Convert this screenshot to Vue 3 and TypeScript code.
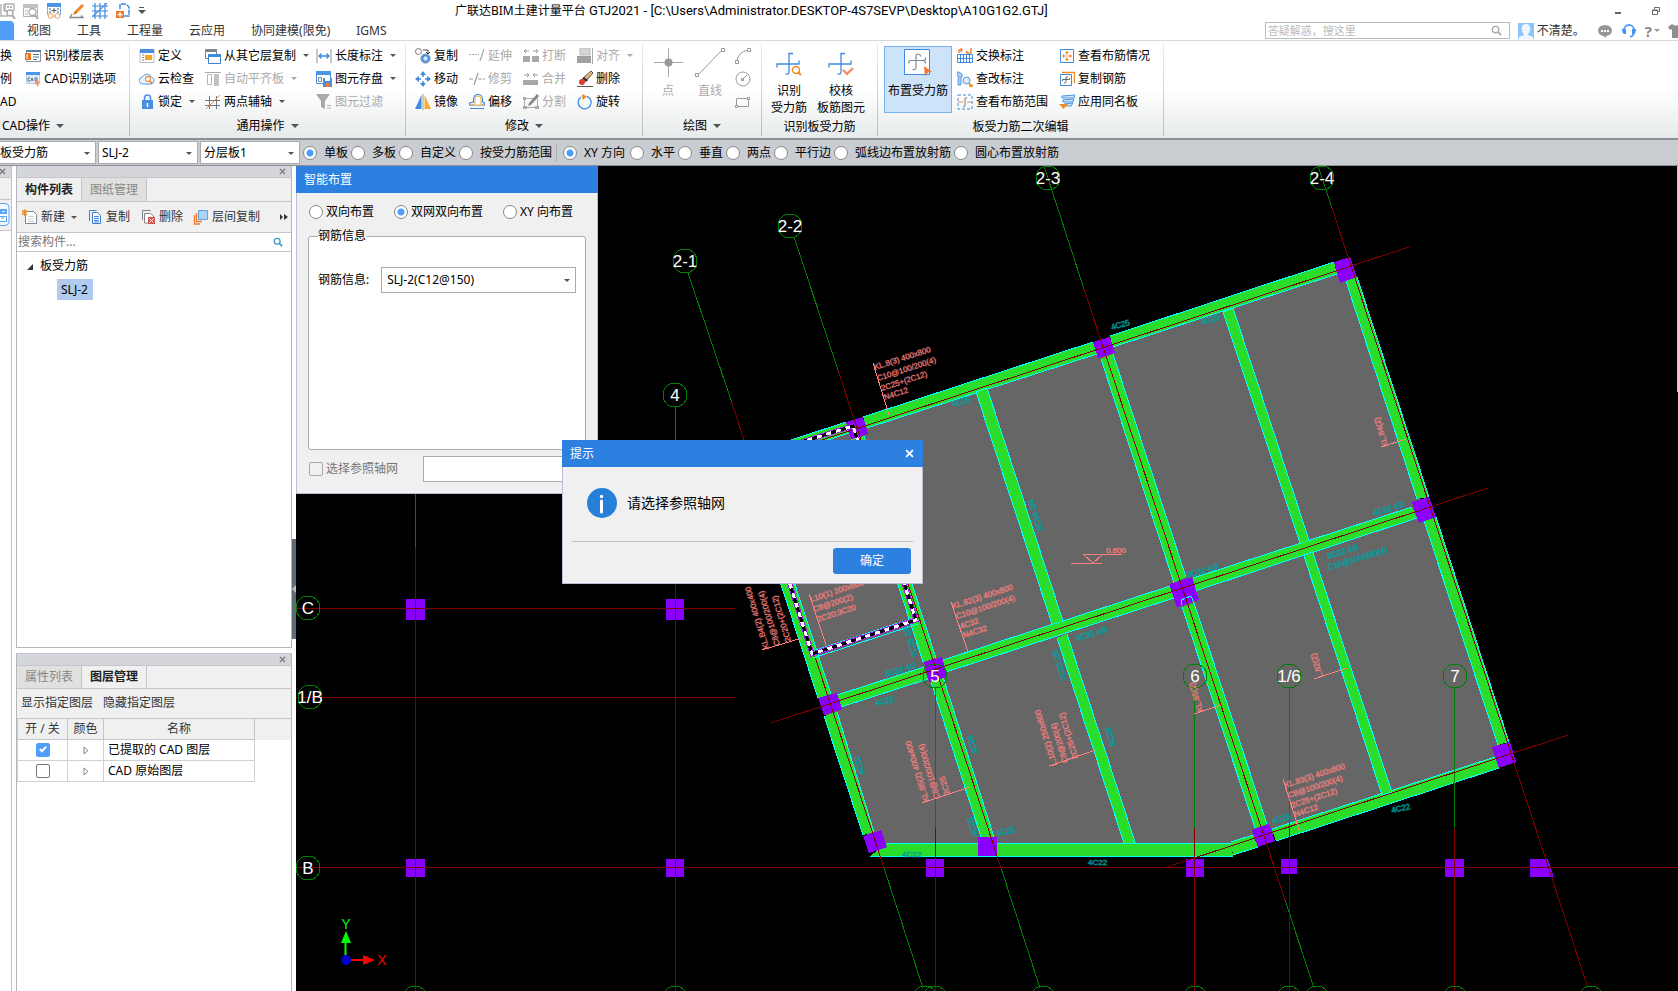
<script setup lang="ts">
import { ref } from 'vue'

interface Tool {
  icon: string
  text: string
  caret?: boolean
  off?: boolean
}
interface Note {
  x: number
  y: number
  r: number
  t: string
}
type Line = [number, number, number, number]

const quick = ['q-find', 'q-search', 'q-view', 'q-brush', 'q-grid', 'q-add']
const tabs = ['视图', '工具', '工程量', '云应用', '协同建模(限免)', 'IGMS']

const cadTools: Tool[] = [
  { icon: 'floor', text: '识别楼层表' },
  { icon: 'cad', text: 'CAD识别选项' },
]
const commonTools: Tool[] = [
  { icon: 'define', text: '定义' },
  { icon: 'cloud', text: '云检查' },
  { icon: 'lock', text: '锁定', caret: true },
  { icon: 'layers', text: '从其它层复制', caret: true },
  { icon: 'align-slab', text: '自动平齐板', caret: true, off: true },
  { icon: 'axis', text: '两点辅轴', caret: true },
  { icon: 'length', text: '长度标注', caret: true },
  { icon: 'save', text: '图元存盘', caret: true },
  { icon: 'filter', text: '图元过滤', off: true },
]
const editTools: Tool[] = [
  { icon: 'copy', text: '复制' },
  { icon: 'move', text: '移动' },
  { icon: 'mirror', text: '镜像' },
  { icon: 'extend', text: '延伸', off: true },
  { icon: 'trim', text: '修剪', off: true },
  { icon: 'offset', text: '偏移' },
  { icon: 'break', text: '打断', off: true },
  { icon: 'merge', text: '合并', off: true },
  { icon: 'split', text: '分割', off: true },
  { icon: 'align', text: '对齐', caret: true, off: true },
  { icon: 'erase', text: '删除' },
  { icon: 'rotate', text: '旋转' },
]
const rebarTools: Tool[] = [
  { icon: 'swap', text: '交换标注' },
  { icon: 'modify', text: '查改标注' },
  { icon: 'range', text: '查看布筋范围' },
  { icon: 'status', text: '查看布筋情况' },
  { icon: 'copybar', text: '复制钢筋' },
  { icon: 'apply', text: '应用同名板' },
]

const area = ref('单板')
const areas = ['单板', '多板', '自定义', '按受力筋范围']
const direction = ref('XY 方向')
const directions = ['XY 方向', '水平', '垂直', '两点', '平行边', '弧线边布置放射筋', '圆心布置放射筋']
const layout = ref('双网双向布置')
const layouts = ['双向布置', '双网双向布置', 'XY 向布置']
const layers = ref([
  { name: '已提取的 CAD 图层', on: true },
  { name: 'CAD 原始图层', on: false },
])

/* Beams: edge A start/end, edge B start/end */
const beams: number[][] = [
  [863, 417, 1093, 342, 867, 428, 1097, 354],
  [1110, 336, 1334, 262, 1113, 347, 1337, 274],
  [742, 456, 846, 422, 745, 467, 849, 433],
  [1357, 277, 1429, 497, 1346, 281, 1417, 499],
  [1436, 517, 1509, 742, 1424, 521, 1498, 745],
  [837, 695, 924, 667, 841, 707, 928, 679],
  [943, 660, 1170, 586, 946, 672, 1174, 598],
  [1193, 578, 1412, 507, 1195, 591, 1417, 518],
  [1272, 829, 1495, 757, 1276, 841, 1499, 768],
  [1231, 842, 1253, 835, 1233, 855, 1258, 847],
  [770, 551, 818, 698, 784, 551, 831, 694],
  [824, 716, 863, 835, 837, 712, 874, 832],
  [851, 439, 923, 662, 864, 436, 936, 658],
  [931, 682, 981, 837, 943, 677, 994, 837],
  [976, 392, 1052, 624, 987, 388, 1063, 621],
  [1057, 638, 1125, 846, 1067, 634, 1136, 845],
  [1101, 359, 1174, 583, 1113, 354, 1186, 577],
  [1182, 607, 1255, 828, 1194, 603, 1267, 824],
  [1223, 312, 1300, 543, 1233, 308, 1309, 540],
  [1304, 556, 1382, 795, 1313, 553, 1392, 792],
  [887, 843, 1231, 843, 870, 856, 1233, 856],
]
const columns = [
  '846,422 863,417 868,434 851,439',
  '1093,342 1110,337 1115,353 1098,358',
  '1334,262 1350,257 1357,277 1340,283',
  '1412,502 1429,497 1436,517 1419,523',
  '1492,747 1510,742 1516,762 1499,768',
  '1169,584 1192,577 1199,600 1177,607',
  '924,662 942,657 947,677 929,682',
  '818,698 837,693 842,709 824,715',
  '863,836 881,830 887,847 869,853',
  '978,837 997,837 997,856 978,856',
  '1252,830 1269,824 1275,841 1258,847',
  '406,599 425,599 425,620 406,620',
  '666,599 684,599 684,620 666,620',
  '406,859 425,859 425,877 406,877',
  '666,859 684,859 684,877 666,877',
  '926,859 944,859 944,877 926,877',
  '1186,859 1204,859 1204,877 1186,877',
  '1281,859 1297,859 1297,874 1281,874',
  '1445,859 1464,859 1464,877 1445,877',
  '1530,859 1548,859 1554,877 1530,877',
]
const redAxes: Line[] = [
  [296, 608.5, 735, 608.5],
  [296, 697.5, 735, 697.5],
  [296, 867.5, 1678, 867.5],
  [415.5, 547, 415.5, 991],
  [675.5, 547, 675.5, 991],
  [935.5, 828, 935.5, 991],
  [1194.5, 828, 1194.5, 991],
  [1289.5, 828, 1289.5, 991],
  [1454.5, 828, 1454.5, 991],
  [740, 467, 1409, 247],
  [771, 723, 1488, 488],
  [1167, 867, 1568, 735],
  [732, 403, 884, 868],
  [838, 370, 1001, 868],
  [1084, 289, 1285, 900],
  [1332, 208, 1588, 988],
]
const greenAxes: Line[] = [
  [415.5, 494, 415.5, 547],
  [675.5, 407, 675.5, 547],
  [935.5, 688, 935.5, 828],
  [1194.5, 688, 1194.5, 828],
  [1289.5, 688, 1289.5, 828],
  [1454.5, 688, 1454.5, 828],
  [688, 273, 732, 403],
  [794, 237, 838, 370],
  [1044, 166, 1084, 289],
  [1318, 166, 1332, 208],
  [884, 868, 923, 988],
  [1001, 868, 1040, 988],
  [1285, 900, 1314, 988],
]
const bubbles = [
  { x: 685, y: 261, t: '2-1' },
  { x: 790, y: 226, t: '2-2' },
  { x: 1048, y: 178, t: '2-3' },
  { x: 1322, y: 178, t: '2-4' },
  { x: 675, y: 395, t: '4' },
  { x: 308, y: 608, t: 'C' },
  { x: 310, y: 697, t: '1/B' },
  { x: 308, y: 868, t: 'B' },
  { x: 935, y: 676, t: '5' },
  { x: 1195, y: 676, t: '6' },
  { x: 1289, y: 676, t: '1/6' },
  { x: 1455, y: 676, t: '7' },
]
const footBubbles = [415, 675, 925, 935, 1043, 1195, 1289, 1317, 1455, 1591]

const marks: Note[] = [
  { x: 875, y: 370, r: -18, t: 'KL.8(3) 400x800' },
  { x: 878, y: 381, r: -18, t: 'C10@100/200(4)' },
  { x: 882, y: 391, r: -18, t: '2C25+(2C12)' },
  { x: 885, y: 400, r: -18, t: 'N4C12' },
  { x: 953, y: 609, r: -18, t: 'KL.82(3) 400x800' },
  { x: 957, y: 619, r: -18, t: 'C10@100/200(4)' },
  { x: 961, y: 629, r: -18, t: '4C32' },
  { x: 964, y: 638, r: -18, t: 'N4C32' },
  { x: 811, y: 602, r: -18, t: 'L10(1) 200x600' },
  { x: 814, y: 612, r: -18, t: 'C8@200(2)' },
  { x: 818, y: 622, r: -18, t: '2C20;3C20' },
  { x: 1285, y: 788, r: -18, t: 'KL.83(3) 400x800' },
  { x: 1289, y: 798, r: -18, t: 'C8@100/200(4)' },
  { x: 1292, y: 808, r: -18, t: '2C25+(2C12)' },
  { x: 1295, y: 817, r: -18, t: 'N4C12' },
  { x: 769, y: 648, r: -107, t: 'KL.B4(2) 400x400' },
  { x: 780, y: 645, r: -107, t: 'C8@100/200(4)' },
  { x: 791, y: 641, r: -107, t: '2C20+(2C12)' },
  { x: 929, y: 801, r: -107, t: 'KL.85(2) 400x400' },
  { x: 940, y: 798, r: -107, t: 'C8@100/200(4)' },
  { x: 950, y: 794, r: -107, t: '2C25' },
  { x: 1057, y: 765, r: -107, t: 'L.10(2) 250x600' },
  { x: 1068, y: 762, r: -107, t: 'C8@200(4)' },
  { x: 1078, y: 758, r: -107, t: '2C25+(2C12)' },
  { x: 1323, y: 677, r: -107, t: 'L.82(2)' },
  { x: 1203, y: 711, r: -107, t: 'KL.85(2)' },
  { x: 1388, y: 446, r: -107, t: 'KL.84(2)' },
  { x: 1106, y: 553, r: 0, t: '0.600' },
]
const leaders: Line[] = [
  [873, 363, 889, 415],
  [951, 602, 968, 652],
  [809, 594, 826, 645],
  [1283, 779, 1300, 833],
  [762, 650, 802, 638],
  [922, 803, 970, 787],
  [1049, 766, 1096, 750],
  [1314, 679, 1347, 668],
  [1194, 714, 1221, 705],
  [1381, 447, 1406, 439],
]
const bars: Note[] = [
  { x: 1112, y: 330, r: -16, t: '4C25' },
  { x: 953, y: 407, r: -16, t: '4C25' },
  { x: 1202, y: 325, r: -16, t: '4C25' },
  { x: 1328, y: 559, r: -17, t: '9C32 4/5' },
  { x: 1329, y: 570, r: -17, t: 'C10@100/200(4)' },
  { x: 1188, y: 578, r: -17, t: '8C32 4/4' },
  { x: 1273, y: 824, r: -16, t: '4C25' },
  { x: 1392, y: 813, r: -12, t: '4C22' },
  { x: 1374, y: 516, r: -17, t: '4C32 4/2' },
  { x: 1077, y: 641, r: -17, t: '9C32 4/5' },
  { x: 886, y: 677, r: -17, t: '5C32 4/2' },
  { x: 876, y: 706, r: -14, t: '4C22' },
  { x: 902, y: 857, r: 0, t: '4C22' },
  { x: 1088, y: 865, r: 0, t: '4C22' },
  { x: 997, y: 836, r: -12, t: '4C25' },
  { x: 865, y: 774, r: -107, t: '4C22' },
  { x: 978, y: 753, r: -107, t: '4C25' },
  { x: 1116, y: 745, r: -107, t: '8C28' },
  { x: 978, y: 835, r: -107, t: '4C25' },
  { x: 1067, y: 680, r: -107, t: '7C25 2/5' },
  { x: 918, y: 656, r: -107, t: '7C25 2/5' },
  { x: 1043, y: 530, r: -107, t: '8C34 2/4' },
]
</script>

<template>
  <div class="app">
    <svg class="sprite" aria-hidden="true">
      <symbol id="q-find" viewBox="0 0 16 16"><path d="M1 1v12h7M4 1v7M14 8V1H5v7h4" fill="none" stroke="#b0b0b0" stroke-width="1.4"/><path d="M7 3h2v2H7zM10 3h2v2h-2z" fill="#b0b0b0"/><circle cx="10" cy="10" r="3" fill="#fff" stroke="#a8a8a8" stroke-width="1.4"/><path d="M12 12l3 4" stroke="#a8a8a8" stroke-width="2"/></symbol>
      <symbol id="q-search" viewBox="0 0 16 16"><path d="M.5 1.5h14v12H.5z" fill="#fff" stroke="#b0b0b0"/><path d="M0 1h15v4H0z" fill="#c0c0c0"/><path d="M2 8h3M2 11h3" stroke="#b0b0b0"/><circle cx="9.500" cy="9" r="3.500" fill="#fff" stroke="#a8a8a8" stroke-width="1.3"/><path d="M12 12l3 4" stroke="#a8a8a8" stroke-width="2"/></symbol>
      <symbol id="q-view" viewBox="0 0 16 16"><path d="M1.500 1v11M14.500 1v11M1 11.500h3M12 11.500h3" stroke="#7db2ea"/><path d="M1 0h14v4H1z" fill="#4a97e8"/><path d="M8 5v5M5.500 7.500h5M3 6h2M11 6h2M3 9h2M11 9h2" stroke="#4a5a6a"/><circle cx="4.500" cy="13" r="2.400" fill="#fff" stroke="#ee9a62"/><circle cx="11.500" cy="13" r="2.400" fill="#fff" stroke="#ee9a62"/><path d="M7 13h2" stroke="#ee9a62"/></symbol>
      <symbol id="q-brush" viewBox="0 0 16 16"><path d="M14 2L6 10" stroke="#f08a24" stroke-width="3"/><path d="M6 8l2 2-4 2z" fill="#e06a10"/><path d="M3 11l-2 3.500h13l-2-2" fill="none" stroke="#7d8890" stroke-width="1.300"/></symbol>
      <symbol id="q-grid" viewBox="0 0 16 16"><path d="M3 0v16M8 0v16M13 0v16M0 3h16M0 8h16M0 13h16M15 0L0 14" stroke="#3e8ae0" stroke-width="1.200"/></symbol>
      <symbol id="q-add" viewBox="0 0 16 16"><path d="M5 6V1h6l3 3v9H9" fill="none" stroke="#3e8ae0" stroke-width="1.500" stroke-dasharray="5 1"/><path d="M1 8h8v7H1z" fill="#ec7424"/><path d="M5 9v5M2.500 11.500h5" stroke="#fff" stroke-width="1.300"/></symbol>
      <symbol id="floor" viewBox="0 0 16 16"><path d="M1.500 2.500h14v11h-14z" fill="#fff" stroke="#8a949c"/><path d="M1 2h15v2H1z" fill="#5b7f9f"/><path d="M0 5h6v7H0z" fill="#ec7424"/><path d="M2 6v5" stroke="#fff"/><path d="M8 6.500h6M8 9h6M8 11.500h4" stroke="#56718c"/></symbol>
      <symbol id="cad" viewBox="0 0 16 16"><path d="M1.500 2.500h13v10h-13z" fill="#dcebfb" stroke="#b6d0ea"/><path d="M1 1h14v3H1z" fill="#4a97e8"/><path d="M5 7H3v3h2M6 10l1-3 1 3M10 7v3h2V7z" fill="none" stroke="#5b7288"/><path d="M11 8l4 4-2 .500 1 2.500-1.500.500-1-2.500-1.500 1z" fill="#f08a64"/></symbol>
      <symbol id="define" viewBox="0 0 16 16"><path d="M1 1.500h14v13H1z" fill="#fff" stroke="#b9bec4"/><path d="M1 1h14v4H1z" fill="#4a8ee0"/><path d="M6 7h7v5H6z" fill="#f5a51e"/><path d="M3 7h2M3 9.500h2M3 12h2" stroke="#888"/></symbol>
      <symbol id="cloud" viewBox="0 0 16 16"><path d="M4 13h8a3.500 3.500 0 0 0 .5-6.800A5 5 0 0 0 3.500 6 3.500 3.500 0 0 0 4 13z" fill="#eef6ff" stroke="#5a9ee8"/><circle cx="9" cy="8" r="2.500" fill="#fff" stroke="#ee9a50" stroke-width="1.300"/><path d="M11 10l2 3" stroke="#ee7a30" stroke-width="1.500"/></symbol>
      <symbol id="lock" viewBox="0 0 16 16"><path d="M5.500 7V4a2.800 2.800 0 0 1 6 0v3" fill="none" stroke="#4a8ee0" stroke-width="1.600"/><path d="M3 6h11v9H3z" fill="#4a8ee0"/><path d="M8.500 9v4" stroke="#fff" stroke-width="1.500"/></symbol>
      <symbol id="layers" viewBox="0 0 16 16"><path d="M.500 1.500h11v9H.500z" fill="#fff" stroke="#7c868e"/><path d="M0 1h12v3H0z" fill="#7c868e"/><path d="M3.500 6.500h12v9h-12z" fill="#fff" stroke="#3e7ed0"/><path d="M3 6h13v3H3z" fill="#3e8ae0"/></symbol>
      <symbol id="align-slab" viewBox="0 0 16 16"><path d="M0 1.500h16" stroke="#aaa"/><path d="M2.500 3.500h4v10h-4z" fill="#fff" stroke="#b8b8b8"/><path d="M9 3h5v12H9z" fill="#c2c2c2"/></symbol>
      <symbol id="axis" viewBox="0 0 16 16"><path d="M4.500 2v13M11.500 2v13M0 6.500h15M0 11.500h15" stroke="#6e7880"/><path d="M1 15L15 1" stroke="#f08a4a"/></symbol>
      <symbol id="length" viewBox="0 0 16 16"><path d="M1 1v14M15 1v14" stroke="#8a949c"/><path d="M3 8h10M5.500 5.500L3 8l2.500 2.500M10.500 5.500L13 8l-2.500 2.500" fill="none" stroke="#3e8ae0" stroke-width="1.300"/></symbol>
      <symbol id="save" viewBox="0 0 16 16"><path d="M.500 1.500h14v11H.500z" fill="#fff" stroke="#4a8ee0"/><path d="M0 0h15v4H0z" fill="#4a97e8"/><path d="M2.500 6.500h3v4h-3z" fill="none" stroke="#7b8b99"/><path d="M7 7h9v9H7z" fill="#4a8ee0"/><path d="M9 7h5v3H9z" fill="#fff"/><path d="M10 12h4v4h-4z" fill="#f07c28"/></symbol>
      <symbol id="filter" viewBox="0 0 16 16"><path d="M0 0h14L9 7v8l-4-2V7z" fill="#a9a9a9"/><path d="M11 11.500h4M11 14h4" stroke="#b0b0b0"/></symbol>
      <symbol id="copy" viewBox="0 0 16 16"><circle cx="3.500" cy="3.500" r="3" fill="#fff" stroke="#777"/><path d="M8 2h5v3M11 4l2 2 2-2" fill="none" stroke="#444"/><circle cx="10.500" cy="10.500" r="4.500" fill="#fff" stroke="#4a6a9a"/><circle cx="10.500" cy="10.500" r="3" fill="#cfe6fa" stroke="#3e8ae0" stroke-width="1.500"/></symbol>
      <symbol id="move" viewBox="0 0 16 16"><path d="M8 0l3 4H5zM8 16l3-4H5zM0 8l4-3v6zM16 8l-4-3v6z" fill="#3e8ae0"/><path d="M8 3v3M8 10v3M3 8h3M10 8h3" stroke="#3e8ae0" stroke-width="1.500"/></symbol>
      <symbol id="mirror" viewBox="0 0 16 16"><path d="M6.500 1v14H0z" fill="#3e8ae0"/><path d="M9.500 1v14H16z" fill="#f5b02c"/><path d="M8 0v16" stroke="#999"/></symbol>
      <symbol id="extend" viewBox="0 0 16 16"><path d="M0 6.500h10" stroke="#aaa" stroke-dasharray="2 1"/><path d="M15 1l-4 12" stroke="#aaa" stroke-width="1.300"/></symbol>
      <symbol id="trim" viewBox="0 0 16 16"><path d="M0 8h5M9 8h7" stroke="#999" stroke-dasharray="4 1"/><path d="M9 2L5 14" stroke="#999" stroke-width="1.200"/></symbol>
      <symbol id="offset" viewBox="0 0 16 16"><path d="M1 14.500h14M.500 11V9l4-1V5a4.500 4.500 0 0 1 9 0v3l2 1v2z" fill="none" stroke="#3e8ae0" stroke-width="1.200"/><path d="M3 11l3-1V5a3 3 0 0 1 6 0v5l3 1z" fill="#fff" stroke="#f0b040"/></symbol>
      <symbol id="break" viewBox="0 0 16 16"><path d="M0 8h7v6H0zM9 8h7v6H9z" fill="#a8a8a8"/><path d="M1 3h5M3 1L1 3l2 2M10 3h5M13 1l2 2-2 2" fill="none" stroke="#999"/></symbol>
      <symbol id="merge" viewBox="0 0 16 16"><path d="M0 9h15v5H0z" fill="#a8a8a8"/><path d="M1 4h5M4 2l2 2-2 2M15 4h-5M12 2l-2 2 2 2" fill="none" stroke="#999"/></symbol>
      <symbol id="split" viewBox="0 0 16 16"><path d="M1.500 4.500h13v9h-13z" fill="none" stroke="#aaa"/><path d="M0 12h4v3H0zM0 3h3v3H0zM12 12h4v3h-4z" fill="#aaa"/><path d="M14 0l2 2-8 9-3 1 1-3z" fill="#888"/></symbol>
      <symbol id="align" viewBox="0 0 16 16"><path d="M3 0h10v7H3z" fill="#d5d5d5" stroke="#bbb"/><path d="M0 8h14v7H0z" fill="#a0a0a0"/><path d="M15.500 0v16" stroke="#aaa"/></symbol>
      <symbol id="erase" viewBox="0 0 16 16"><path d="M14 0l2 2-7 8-3-3z" fill="#e6b878" stroke="#555"/><path d="M7 6l4 3-2 2-4-3z" fill="#333"/><circle cx="5" cy="11" r="3" fill="#d8402c"/><path d="M0 15.500h16" stroke="#555"/></symbol>
      <symbol id="rotate" viewBox="0 0 16 16"><path d="M10 2.300A6.500 6.500 0 1 1 4 3" fill="none" stroke="#3e8ae0" stroke-width="1.300"/><path d="M5 0l5 2.500L5.500 6z" fill="#f08a24"/></symbol>
      <symbol id="point" viewBox="0 0 30 30"><path d="M15.500 1v29M1 15.500h29" stroke="#a9a9a9"/><circle cx="15.500" cy="15.500" r="4" fill="#999"/></symbol>
      <symbol id="line" viewBox="0 0 30 30"><path d="M3 28L27 3" stroke="#999"/><path d="M.500 26.500h3v3h-3zM26.500 1.500h3v3h-3z" fill="#fff" stroke="#999"/></symbol>
      <symbol id="arc" viewBox="0 0 16 16"><path d="M2 13Q3 4 13 2" fill="none" stroke="#999"/><path d="M.500 12.500h3v3h-3zM12.500.500h3v3h-3z" fill="#fff" stroke="#999"/></symbol>
      <symbol id="circle" viewBox="0 0 16 16"><circle cx="8" cy="8" r="7" fill="none" stroke="#999"/><path d="M7.500 8.500L12 4M6.500 7.500h2v2h-2z" fill="none" stroke="#999"/></symbol>
      <symbol id="rect" viewBox="0 0 16 16"><path d="M1.500 4.500h12v8h-12z" fill="none" stroke="#999"/><path d="M.500 11.500h2v2h-2zM12.500 3.500h2v2h-2z" fill="#fff" stroke="#999"/></symbol>
      <symbol id="bar-find" viewBox="0 0 26 26"><path d="M17 2.500h-4v18q0 3.500-3.500 2.500M1 16.500V13h22V9.500" fill="none" stroke="#3e8ae0" stroke-width="1.300"/><circle cx="20" cy="19" r="3.500" fill="#fff" stroke="#f08a24" stroke-width="1.400"/><path d="M22 21l3 3" stroke="#f08a24" stroke-width="2"/></symbol>
      <symbol id="bar-check" viewBox="0 0 26 26"><path d="M17 2.500h-4v18q0 3.500-3.500 2.500M1 16.500V13h22V9.500" fill="none" stroke="#3e8ae0" stroke-width="1.300"/><path d="M15 19l4 4 6-6" fill="none" stroke="#f08a60" stroke-width="2.200"/></symbol>
      <symbol id="bar-place" viewBox="0 0 28 28"><path d="M.500.500h25v25H.500z" fill="#fff" stroke="#3e8ae0"/><path d="M17 7.500Q16 5 14 5t-2 3v10q0 3.500-3.500 2.500M5 14.500Q4 11.500 7 11.500h12q3 0 2.500-3M21.500 14.500q0-3-3-3" fill="none" stroke="#7e8a94" stroke-width="1.200"/><path d="M20 17l8 6-4 .500-3 4z" fill="#f07828"/></symbol>
      <symbol id="swap" viewBox="0 0 16 16"><path d="M2 5V2h4M4 0v4M9 3l2 2M14 0v5h-5" fill="none" stroke="#f08a4a" stroke-width="1.500"/><path d="M.500 6.500h15v8H.500zM.500 10.500h15M3.500 6v9M6.500 6v9M9.500 6v9M12.500 6v9" fill="none" stroke="#3e8ae0"/></symbol>
      <symbol id="modify" viewBox="0 0 16 16"><path d="M0 1h2l3 2v3H4v8H1V8l1-2-2-1z" fill="#a9cdf2" stroke="#3e8ae0" stroke-width=".800"/><circle cx="9.500" cy="9.500" r="3.500" fill="#dceafa" stroke="#4a97e8"/><path d="M12 12l4 3-3 1z" fill="#f08a24" stroke="#f08a24"/></symbol>
      <symbol id="range" viewBox="0 0 16 16"><path d="M1 1h14v14H1z" fill="none" stroke="#3e8ae0" stroke-dasharray="3 2"/><path d="M10 4q-2-1-2 1v6q0 2-2 2" fill="none" stroke="#777"/><path d="M1 8h5M10 8h5" stroke="#f08a4a" stroke-width="1.200"/></symbol>
      <symbol id="status" viewBox="0 0 16 16"><path d="M1.500 1.500h13v13h-13z" fill="#fff" stroke="#3e8ae0"/><path d="M8 3v4M8 9v4M3 8h4M9 8h4M6.500 4.500h3M6.500 11.500h3M4.500 6.500v3M11.500 6.500v3" stroke="#f07c28"/></symbol>
      <symbol id="copybar" viewBox="0 0 16 16"><path d="M3 1.500h12.500V12" fill="none" stroke="#f08a24" stroke-width="1.400"/><path d="M1.500 3.500h11v11h-11z" fill="#fff" stroke="#3e8ae0"/><path d="M9 6H7v5q0 1-2 1M3.500 10V8.500h7V7" fill="none" stroke="#666"/></symbol>
      <symbol id="apply" viewBox="0 0 16 16"><path d="M3 2l13-1-1 3H3zM4 6l11-1-1 3H4zM5 10l9-1-2 3H7z" fill="#cfe6fa" stroke="#3e8ae0" stroke-width=".900"/><path d="M0 10h9l-4.500 5z" fill="#f08a24"/></symbol>
      <symbol id="new" viewBox="0 0 16 16"><path d="M3.500 2.500h8l3 3v9h-11z" fill="#fff" stroke="#7c868e"/><path d="M6 7.500h6M6 10h6M6 12.500h6" stroke="#c8cdd2"/><path d="M0 1h5v5H0z" fill="#f5b25c"/><path d="M0 1l5 5M5 1L0 6M2.500 0v7" stroke="#d8801c" stroke-width=".700"/></symbol>
      <symbol id="docs" viewBox="0 0 16 16"><path d="M2.500 12V1.500h7" fill="none" stroke="#3e7ed0"/><path d="M5.500 3.500h5l3 3v8h-8z" fill="#fff" stroke="#3e7ed0"/><path d="M7 7.500h5M7 9.500h5M7 11.500h5M7 13h5" stroke="#3e8ae0"/></symbol>
      <symbol id="docdel" viewBox="0 0 16 16"><path d="M2.500 11V1.500h8" fill="none" stroke="#7c868e"/><path d="M4.500 4.500V14h9V7l-3-2.500z" fill="#fff" stroke="#7c868e"/><path d="M8 8h7v7H8z" fill="#d9534f"/><path d="M9.500 9.500l4 4M13.500 9.500l-4 4" stroke="#fff"/></symbol>
      <symbol id="floors" viewBox="0 0 16 16"><path d="M1.500 6v9H7M3.500 4v8.500H9" fill="none" stroke="#ee7a30" stroke-width="1.300"/><path d="M5.500 1.500h9v9h-9z" fill="#aed2fa" stroke="#5f9fe4"/></symbol>
      <symbol id="mag" viewBox="0 0 12 12"><circle cx="5" cy="5" r="3.500" fill="none" stroke="currentColor" stroke-width="1.500"/><path d="M7.500 7.500L11 11" stroke="currentColor" stroke-width="2"/></symbol>
      <symbol id="cross" viewBox="0 0 8 8"><path d="M1 1l6 6M7 1L1 7" stroke="currentColor" stroke-width="1.600"/></symbol>
      <symbol id="avatar" viewBox="0 0 16 16"><path d="M0 0h16v16H0z" fill="#8cc4f8"/><path d="M8 1a4 4 0 0 1 4 4h1v1h-1q0 4-2 5v1l5 2v2H1v-2l5-2v-1Q4 10 4 6H3V5h1a4 4 0 0 1 4-4z" fill="#eef7ff"/></symbol>
      <symbol id="chat" viewBox="0 0 16 16"><ellipse cx="8" cy="7.500" rx="7" ry="5.500" fill="#969696"/><path d="M5 12l4 3V12z" fill="#969696"/><path d="M4 7h2v2H4zM7 7h2v2H7zM10 7h2v2h-2z" fill="#fff"/></symbol>
      <symbol id="headset" viewBox="0 0 16 16"><path d="M3 8V7a5 5 0 0 1 10 0v2q0 4-4 5" fill="none" stroke="#4aa0f8" stroke-width="1.800"/><path d="M1 6h4v5H3q-2-1-2-5zM15 6h-4v5h2q2-1 2-5z" fill="#3e96f4"/></symbol>
      <symbol id="shirt" viewBox="0 0 16 16"><path d="M0 4l4-3q4 3 8 0l4 3-2 3-2-1v9H4V6L2 7z" fill="#8e8e8e"/></symbol>
    </svg>

    <header class="top">
      <div class="quick">
        <button v-for="q in quick" :key="q" type="button" :aria-label="q"><svg><use :href="'#' + q" /></svg></button>
        <button type="button" class="more" aria-label="更多"><i class="caret big"></i></button>
      </div>
      <h1>广联达BIM土建计量平台 <span>GTJ2021 - [C:\Users\Administrator.DESKTOP-4S7SEVP\Desktop\A10G1G2.GTJ]</span></h1>
      <div class="wincontrols">
        <button type="button" aria-label="最小化"><svg viewBox="0 0 10 10"><path d="M2 7h6" stroke="#666" stroke-width="2" /></svg></button>
        <button type="button" aria-label="还原"><svg viewBox="0 0 10 10"><path d="M3.500 3V1.500h5v4H7" fill="none" stroke="#666" /><path d="M1.500 4.500h5v4h-5zM1 4h6" fill="none" stroke="#666" /></svg></button>
      </div>
    </header>
    <nav class="tabs">
      <button type="button" class="current" aria-label="建模"></button>
      <button v-for="t in tabs" :key="t" type="button">{{ t }}</button>
      <div class="account">
        <div class="ask"><input type="text" aria-label="搜索" placeholder="答疑解惑，搜这里" /><svg><use href="#mag" /></svg></div>
        <button type="button" class="user"><svg><use href="#avatar" /></svg>不清楚。</button>
        <button type="button" aria-label="消息"><svg><use href="#chat" /></svg></button>
        <button type="button" aria-label="客服"><svg><use href="#headset" /></svg></button>
        <button type="button" class="help">?<i class="caret"></i></button>
        <button type="button" class="skin" aria-label="皮肤"><svg><use href="#shirt" /></svg></button>
      </div>
    </nav>

    <section class="ribbon">
      <div class="group g-cad">
        <div class="tools">
          <button type="button">换</button><button type="button">例</button><button type="button">AD</button>
          <button v-for="t in cadTools" :key="t.text" type="button"><svg><use :href="'#' + t.icon" /></svg>{{ t.text }}</button>
        </div>
        <button type="button" class="label">CAD操作<i class="caret big"></i></button>
      </div>
      <div class="group g-common">
        <div class="tools">
          <button v-for="t in commonTools" :key="t.text" type="button" :disabled="t.off"><svg><use :href="'#' + t.icon" /></svg>{{ t.text }}<i v-if="t.caret" class="caret"></i></button>
        </div>
        <button type="button" class="label">通用操作<i class="caret big"></i></button>
      </div>
      <div class="group g-edit">
        <div class="tools">
          <button v-for="t in editTools" :key="t.text" type="button" :disabled="t.off"><svg><use :href="'#' + t.icon" /></svg>{{ t.text }}<i v-if="t.caret" class="caret"></i></button>
        </div>
        <button type="button" class="label">修改<i class="caret big"></i></button>
      </div>
      <div class="group g-draw">
        <div class="bigs">
          <button type="button" class="large" disabled><svg><use href="#point" /></svg>点</button>
          <button type="button" class="large" disabled><svg><use href="#line" /></svg>直线</button>
          <div class="shapes">
            <button type="button" aria-label="弧"><svg><use href="#arc" /></svg></button>
            <button type="button" aria-label="圆"><svg><use href="#circle" /></svg></button>
            <button type="button" aria-label="矩形"><svg><use href="#rect" /></svg></button>
          </div>
        </div>
        <button type="button" class="label">绘图<i class="caret big"></i></button>
      </div>
      <div class="group g-scan">
        <div class="bigs">
          <button type="button" class="large"><svg><use href="#bar-find" /></svg>识别<br />受力筋</button>
          <button type="button" class="large"><svg><use href="#bar-check" /></svg>校核<br />板筋图元</button>
        </div>
        <div class="label plain">识别板受力筋</div>
      </div>
      <div class="group g-rebar">
        <div class="bigs">
          <button type="button" class="large picked"><svg><use href="#bar-place" /></svg>布置受力筋</button>
          <div class="tools">
            <button v-for="t in rebarTools" :key="t.text" type="button"><svg><use :href="'#' + t.icon" /></svg>{{ t.text }}</button>
          </div>
        </div>
        <div class="label plain">板受力筋二次编辑</div>
      </div>
    </section>

    <section class="options">
      <span class="drop first"><select aria-label="构件类型"><option>板受力筋</option></select></span>
      <span class="drop"><select aria-label="构件"><option>SLJ-2</option></select></span>
      <span class="drop"><select aria-label="分层"><option>分层板1</option></select></span>
      <div class="choices">
        <label v-for="a in areas" :key="a"><input v-model="area" type="radio" name="area" :value="a" />{{ a }}</label>
      </div>
      <div class="choices second">
        <label v-for="d in directions" :key="d"><input v-model="direction" type="radio" name="direction" :value="d" />{{ d }}</label>
      </div>
    </section>

    <main class="work">
      <aside class="strip">
        <div class="cap"><button type="button" aria-label="关闭"><svg><use href="#cross" /></svg></button></div>
        <div class="slot"></div>
        <div class="slot tall"><button type="button" aria-label="导航"><svg viewBox="0 0 12 24"><path d="M0 .500h5q4 0 4 4v14q0 4-4 4H0" fill="#f4faff" stroke="#5aa6f5" /><path d="M0 6h7v5H0zM0 13h7v6H0z" fill="#5aa6f5" /><path d="M2 8h3L3.500 9.500zM0 14h6v4H0z" fill="#fff" /><path d="M1 15h3" stroke="#5aa6f5" /></svg></button></div>
      </aside>
      <div class="side">
        <section class="panel upper">
          <div class="cap"><button type="button" aria-label="关闭"><svg><use href="#cross" /></svg></button></div>
          <div class="ptabs"><button type="button" class="on">构件列表</button><button type="button">图纸管理</button></div>
          <div class="pbar">
            <button type="button"><svg><use href="#new" /></svg>新建<i class="caret"></i></button>
            <button type="button"><svg><use href="#docs" /></svg>复制</button>
            <button type="button"><svg><use href="#docdel" /></svg>删除</button>
            <button type="button"><svg><use href="#floors" /></svg>层间复制</button>
            <button type="button" class="next" aria-label="更多"><svg viewBox="0 0 8 6"><path d="M0 0l3 3-3 3zM4 0l4 3-4 3z" fill="#333" /></svg></button>
          </div>
          <div class="psearch"><input type="text" aria-label="搜索构件" placeholder="搜索构件..." /><svg><use href="#mag" /></svg></div>
          <ul class="tree">
            <li><svg viewBox="0 0 6 6"><path d="M6 0v6H0z" fill="#333" /></svg>板受力筋
              <ul><li><span>SLJ-2</span></li></ul>
            </li>
          </ul>
        </section>
        <section class="panel lower">
          <div class="cap"><button type="button" aria-label="关闭"><svg><use href="#cross" /></svg></button></div>
          <div class="ptabs"><button type="button">属性列表</button><button type="button" class="on">图层管理</button></div>
          <div class="pbar links"><button type="button">显示指定图层</button><button type="button">隐藏指定图层</button></div>
          <div class="tablebox">
            <table>
              <thead><tr><th class="c1">开 / 关</th><th class="c2">颜色</th><th class="c3">名称</th></tr></thead>
              <tbody>
                <tr v-for="l in layers" :key="l.name">
                  <td class="mid"><input v-model="l.on" type="checkbox" :aria-label="l.name" /></td>
                  <td class="mid"><svg viewBox="0 0 6 9"><path d="M1 1v7l4-3.500z" fill="none" stroke="#888" /></svg></td>
                  <td>{{ l.name }}</td>
                </tr>
              </tbody>
            </table>
          </div>
        </section>
      </div>
      <div class="splitter"><button type="button" aria-label="折叠"><svg viewBox="0 0 4 8"><path d="M4 0v8L0 4z" fill="#b8bec4" /></svg></button></div>

      <div class="viewport">
        <svg class="drawing" viewBox="296 166 1382 825" preserveAspectRatio="xMinYMin slice">
          <g class="geometry">
            <polygon points="742,460 850,426 1343,266 1504,756 1233,848 872,848 772,560" fill="#666" />
            <template v-for="(b, i) in beams" :key="i">
              <polygon :points="`${b[0]},${b[1]} ${b[2]},${b[3]} ${b[6]},${b[7]} ${b[4]},${b[5]}`" fill="#2bdd2b" />
              <path :d="`M${b[0]} ${b[1]}L${b[2]} ${b[3]}M${b[4]} ${b[5]}L${b[6]} ${b[7]}`" class="edge" />
            </template>
            <path d="M976 392l11-4M1223 312l10-4M1382 795l10-3" class="edge" />
            <polygon v-for="c in columns" :key="c" :points="c" fill="#8a00ff" />
            <path d="M1181 605v-5l10-4 3 7" class="edge" />
            <line v-for="(a, i) in greenAxes" :key="'g' + i" :x1="a[0]" :y1="a[1]" :x2="a[2]" :y2="a[3]" stroke="#008000" />
            <line v-for="(a, i) in redAxes" :key="'r' + i" :x1="a[0]" :y1="a[1]" :x2="a[2]" :y2="a[3]" stroke="#800000" />
            <path d="M813 651l104-34M813 658l105-34" class="edge" />
            <path d="M750 458l103-32 63 194-104 34-62-196" class="room glow" />
            <path d="M750 458l103-32 63 194-104 34-62-196" class="room" />
            <path d="M750 458l103-32 63 194-104 34-62-196" class="room dash" />
            <line v-for="(a, i) in leaders" :key="'l' + i" :x1="a[0]" :y1="a[1]" :x2="a[2]" :y2="a[3]" stroke="#ff8080" />
            <path d="M1083 554.500h39M1071 563.500h31M1084 555l9 8 9-8" fill="none" stroke="#ff8080" />
            <circle v-for="b in bubbles" :key="b.t" :cx="b.x" :cy="b.y" r="12" class="ring" />
            <circle v-for="x in footBubbles" :key="x" :cx="x" cy="998" r="12" class="ring" />
            <path d="M1677.500 166v226" stroke="#ccc" />
          </g>
          <text v-for="(n, i) in bars" :key="'b' + i" class="note bar" :transform="`translate(${n.x} ${n.y}) rotate(${n.r})`">{{ n.t }}</text>
          <text v-for="(n, i) in marks" :key="'m' + i" class="note" :transform="`translate(${n.x} ${n.y}) rotate(${n.r})`">{{ n.t }}</text>
          <text v-for="b in bubbles" :key="b.t" class="tag" :x="b.x" :y="b.y + 6">{{ b.t }}</text>
          <path d="M345.500 960v-22" stroke="#00ff00" stroke-width="2" /><path d="M341 943l5-12 5 12z" fill="#00ff00" />
          <path d="M346 960h20" stroke="#ff0000" stroke-width="2" /><path d="M363 955l12 5-12 5z" fill="#ff0000" />
          <circle cx="346" cy="960" r="5" fill="#0000c8" />
          <text class="ucs" x="346" y="929" fill="#00ff00">Y</text><text class="ucs" x="382" y="965" fill="#ff0000">X</text>
        </svg>

        <form class="dialog smart" @submit.prevent>
          <h2>智能布置</h2>
          <div class="kinds">
            <label v-for="k in layouts" :key="k"><input v-model="layout" type="radio" name="layout" :value="k" />{{ k }}</label>
          </div>
          <fieldset>
            <legend>钢筋信息</legend>
            <label for="rebar">钢筋信息:</label>
            <span class="drop"><select id="rebar"><option>SLJ-2(C12@150)</option></select></span>
          </fieldset>
          <div class="refer"><label><input type="checkbox" disabled />选择参照轴网</label><input type="text" aria-label="参照轴网" disabled /></div>
        </form>

        <section class="dialog tip" role="alertdialog" aria-label="提示">
          <h2>提示<button type="button" aria-label="关闭"><svg><use href="#cross" /></svg></button></h2>
          <p><svg viewBox="0 0 30 30"><circle cx="15" cy="15" r="15" fill="#267fd9" /><circle cx="14.500" cy="8.500" r="1.700" fill="#fff" /><path d="M14.500 13v11" stroke="#fff" stroke-width="3" stroke-linecap="round" /></svg>请选择参照轴网</p>
          <footer><button type="button">确定</button></footer>
        </section>
      </div>
    </main>
  </div>
</template>

<style>
html, body { margin: 0; }
</style>

<style scoped>
.app { height: 100vh; display: flex; flex-direction: column; overflow: hidden; background: #fff; color: #000; font: 12px/18px "Noto Sans", "Noto Sans CJK SC", sans-serif; white-space: nowrap; }
.app *, .app *::before, .app *::after { box-sizing: border-box; }
button, input, select { font: inherit; color: inherit; margin: 0; }
button { padding: 0; border: 0; background: none; }
svg { display: block; flex: none; }
.sprite { position: absolute; width: 0; height: 0; }
.caret { flex: none; width: 0; height: 0; border: 3px solid transparent; border-top-color: #555; border-bottom: 0; }
.caret.big { border-width: 4px 4px 0; }

.top { display: flex; align-items: center; height: 21px; }
.quick { display: flex; gap: 7px; width: 455px; }
.quick svg { width: 16px; height: 16px; }
.quick .more { display: flex; flex-direction: column; justify-content: center; gap: 2px; }
.quick .more::before { content: ""; width: 5px; height: 1px; margin-left: 1px; background: #555; }
h1 { flex: 1; margin: 0; font-size: 12px; font-weight: 400; }
h1 span { font-family: Roboto, "Noto Sans", sans-serif; font-size: 13px; }
.wincontrols { display: flex; gap: 28px; padding-right: 17px; }
.wincontrols svg { width: 10px; height: 10px; }

.tabs { display: flex; align-items: center; gap: 26px; height: 20px; border-bottom: 1px solid #d5d7d9; color: #333; }
.tabs .current { align-self: stretch; width: 14px; margin-right: -13px; background: #4f9ff8; border-radius: 0 4px 0 0; }
.account { display: flex; align-items: center; flex: 1; justify-content: flex-end; gap: 8px; overflow: hidden; }
.ask { display: flex; align-items: center; width: 245px; height: 17px; padding: 0 7px 0 2px; border: 1px solid #bbb; color: #aaa; }
.ask input { flex: 1; min-width: 0; height: 15px; padding: 0; border: 0; outline: 0; font-size: 11px; }
.ask input::placeholder { color: #bbb; }
.ask svg { width: 11px; height: 11px; }
.account button svg { width: 16px; height: 16px; }
.user { display: flex; align-items: center; gap: 3px; margin-right: 4px; }
.help { display: flex; align-items: center; gap: 2px; font-size: 15px; font-weight: 700; color: #888; }
.help .caret { border-top-color: #999; }
.skin { width: 10px; overflow: hidden; }

.ribbon { display: flex; height: 97px; padding: 2px 0; background: linear-gradient(#fff 50%, #e6eaeb); }
.group { flex: none; display: flex; flex-direction: column; padding: 1px 0 0 9px; border-right: 1px solid; border-image: linear-gradient(#eee, #bbb) 1; }
.tools { display: grid; grid-template-rows: repeat(3, 23px); grid-auto-flow: column; justify-content: start; }
.tools button { display: flex; align-items: center; gap: 3px; }
.tools .caret { margin-left: 4px; }
.tools svg { width: 16px; height: 16px; }
.tools button:disabled, .large:disabled { color: #aaa; }
.tools button:disabled .caret { border-top-color: #aaa; }
.label { display: flex; flex: none; justify-content: center; align-items: center; gap: 6px; width: 100%; height: 22px; padding: 4px 9px 0 0; }
.label.plain { padding-top: 6px; }
.g-cad { width: 130px; padding-left: 0; }
.g-cad .tools { grid-template-columns: 25px auto; }
.g-cad .label { justify-content: flex-start; padding-left: 2px; }
.g-common { width: 276px; }
.g-common .tools { grid-template-columns: 66px 111px auto; }
.g-edit { width: 237px; }
.g-edit .tools { grid-template-columns: 54px 54px 54px auto; }
.g-draw { width: 119px; }
.g-scan { width: 116px; padding-left: 6px; }
.g-rebar { width: 286px; padding-left: 6px; }
.bigs { display: flex; height: 69px; }
.large { display: flex; flex-direction: column; align-items: center; line-height: 17px; text-align: center; }
.large svg { width: 30px; height: 30px; margin: 3px 0 5px; }
.g-draw .bigs { gap: 12px; padding-left: 1px; }
.shapes { display: grid; grid-template-rows: repeat(3, 23px); align-items: center; margin-left: -2px; }
.shapes svg { width: 16px; height: 16px; }
.g-scan .bigs { gap: 10px; padding-left: 3px; }
.g-scan .large svg { width: 26px; height: 26px; margin: 7px 0 5px; }
.large.picked { width: 68px; height: 67px; margin: 2px 5px 0 0; border: 1px solid #77b2ee; background: #cce3fa; }
.large.picked svg { width: 28px; height: 28px; margin: 2px 0 5px; }
.g-rebar .tools { grid-template-columns: 102px auto; }
.g-scan .label, .g-rebar .label { padding-right: 6px; }

.options { display: flex; align-items: center; height: 28px; border-top: 2px solid #8b8f92; border-bottom: 1px solid #8b8f92; background: #c9ccd0; }
.drop { position: relative; display: block; width: 100px; height: 23px; margin-right: 2px; }
.drop::after { content: ""; position: absolute; right: 6px; top: 50%; margin-top: -1px; border: 3px solid transparent; border-top-color: #555; border-bottom: 0; pointer-events: none; }
.drop select { appearance: none; width: 100%; height: 100%; padding: 0 14px 0 3px; border: 1px solid #aaa; border-radius: 0; background: #fff; line-height: 18px; }
.drop.first { width: 96px; }
.drop.first select { padding-left: 0; border-left: 0; }
.choices { display: flex; gap: 3px; margin-left: 1px; }
.choices label { display: flex; align-items: center; gap: 7px; }
.choices.second { margin-left: 4px; padding-left: 6px; border-left: 1px solid #adb0b3; }
.choices.second label:first-child { margin-right: 2px; }
input[type="radio"] { appearance: none; flex: none; width: 14px; height: 14px; border: 1px solid #888; border-radius: 50%; background: #fff; }
input[type="radio"]:checked { background: radial-gradient(circle, #4f9ff8 3px, #fff 4px); }
input[type="checkbox"] { appearance: none; flex: none; width: 14px; height: 14px; border: 1px solid #777; border-radius: 2px; background: #fff; }
input[type="checkbox"]:checked { border-color: #4f9ff8; background: #4f9ff8; }
input[type="checkbox"]:checked::after { content: ""; display: block; width: 4px; height: 7px; margin: 1px 0 0 4px; border: solid #fff; border-width: 0 2px 2px 0; transform: rotate(45deg); }
input[type="checkbox"]:disabled { background: #f0f0f0; border-color: #aaa; }

.work { flex: 1; display: flex; min-height: 0; }
.strip { width: 12px; margin-right: 4px; border-right: 1px solid #c0c2c8; overflow: hidden; }
.cap { display: flex; flex: none; justify-content: flex-end; align-items: center; height: 12px; padding-right: 5px; background: #d5d6db; border-bottom: 1px solid #c3c6cc; color: #777; }
.cap svg { width: 7px; height: 7px; }
.slot { height: 22px; background: #f0f0f0; border-bottom: 1px solid #c3c6cc; }
.slot.tall { height: 31px; padding-top: 3px; }
.slot svg { width: 12px; height: 24px; }
.side { display: flex; flex-direction: column; gap: 5px; width: 276px; }
.panel { display: flex; flex-direction: column; min-height: 0; border: 1px solid #b3b6bb; border-top: 0; background: #fff; }
.upper { flex: 482 1 0; }
.lower { flex: 338 1 0; border-top: 1px solid #c3c6cc; border-bottom: 0; }
.ptabs { display: flex; height: 23px; background: #f0f0f0; border-bottom: 1px solid #c3c6cc; }
.upper .ptabs { height: 24px; }
.ptabs button { width: 65px; border-right: 1px solid #c3c6cc; background: #e0e0e0; color: #888; }
.ptabs .on { background: #f0f0f0; color: #222; font-weight: 700; }
.pbar { display: flex; align-items: center; gap: 10px; height: 31px; padding: 0 3px 0 5px; background: #f0f0f0; border-bottom: 1px solid #c3c6cc; color: #333; }
.pbar button { display: flex; align-items: center; gap: 3px; }
.pbar svg { width: 16px; height: 16px; }
.pbar .caret { margin-left: 3px; }
.pbar .next { margin-left: auto; }
.pbar .next svg { width: 8px; height: 6px; }
.pbar.links { padding-left: 4px; }
.lower .pbar { height: 30px; }
.psearch { display: flex; align-items: center; height: 19px; padding: 0 8px 0 1px; border-bottom: 1px solid #c3c6cc; color: #3a95c8; }
.psearch input { flex: 1; min-width: 0; height: 17px; padding: 0; border: 0; outline: 0; }
.psearch input::placeholder { color: #777; }
.psearch svg { width: 10px; height: 10px; }
.tree, .tree ul { list-style: none; margin: 0; padding: 0; }
.tree { padding: 3px 0 0 23px; line-height: 21px; }
.tree > li { position: relative; }
.tree > li > svg { position: absolute; left: -13px; top: 9px; width: 6px; height: 6px; }
.tree ul { padding: 3px 0 0 17px; }
.tree span { display: inline-block; padding: 0 5px 0 4px; background: #b0cbee; }
.tablebox { flex: 1; background: linear-gradient(#f0f0f0 21px, #fff 21px); }
table { border-collapse: collapse; table-layout: fixed; width: 238px; }
th, td { height: 21px; padding: 0 4px; border: 1px solid #d0d0d0; font-weight: 400; text-align: left; line-height: 18px; background: #fff; }
th { text-align: center; padding: 0; background: #f0f0f0; border-color: #c3c6cc; border-top: 0; color: #333; }
.c1 { width: 50px; }
.c2 { width: 36px; }
.mid svg, .mid input { display: block; margin: auto; }
.mid svg { width: 6px; height: 9px; }
.splitter { width: 4px; }
.splitter button { display: flex; align-items: center; width: 4px; height: 100px; margin-top: 373px; background: #5f6b76; }
.splitter svg { width: 4px; height: 8px; }

.viewport { position: relative; flex: 1; min-width: 0; overflow: hidden; background: #000; }
.drawing { position: absolute; inset: 0; width: 100%; height: 100%; }
.geometry { shape-rendering: crispEdges; }
.edge { fill: none; stroke: #00ffff; }
.ring { fill: none; stroke: #008000; }
.room { fill: none; stroke: #000; stroke-width: 3px; }
.room.glow { stroke: #9a20e0; stroke-width: 5px; }
.room.dash { stroke: #fff; stroke-dasharray: 5 5; }
.note { font: 8px "Liberation Sans Narrow", "Liberation Sans", sans-serif; fill: #ff8080; stroke: #ff8080; stroke-width: 1px; stroke-opacity: 0.3; }
.note.bar { fill: #00a0a0; stroke: #00a0a0; stroke-opacity: 0.5; }
.tag { font: 17px "Liberation Sans", sans-serif; fill: #fff; text-anchor: middle; }
.ucs { font: 14px "Liberation Sans", sans-serif; text-anchor: middle; }

.dialog { position: absolute; border: 1px solid #b9c0d4; background: #f0f0f0; }
.dialog h2 { display: flex; justify-content: space-between; align-items: center; height: 27px; margin: -1px -1px 0; padding: 0 9px 0 8px; background: #2c80e0; color: #fff; font-size: 12px; font-weight: 400; }
.dialog h2 svg { width: 9px; height: 9px; }
.smart { left: 0; top: 0; width: 302px; height: 328px; }
.kinds { display: flex; gap: 20px; padding: 10px 12px 0; }
.kinds label, .refer label { display: flex; align-items: center; gap: 3px; }
fieldset { display: flex; align-items: flex-start; gap: 12px; height: 223px; margin: 6px 11px 0; padding: 22px 9px 0; border: 1px solid #aaa; border-radius: 3px; background: #fff; }
legend { padding: 0; }
fieldset label { line-height: 26px; }
fieldset .drop { flex: 1; height: 26px; margin: 0; }
fieldset .drop select { padding-left: 5px; }
.refer { display: flex; gap: 25px; align-items: center; margin-top: 6px; padding: 0 11px 0 12px; color: #777; }
.refer input[type="text"] { flex: 1; min-width: 0; height: 26px; border: 1px solid #aaa; background: #fff; }
.tip { left: 266px; top: 274px; width: 361px; height: 144px; }
.tip p { display: flex; align-items: center; gap: 10px; height: 75px; margin: 0 9px; padding: 0 15px 2px; border-bottom: 1px solid #c0c0c0; font-size: 14px; }
.tip p svg { width: 30px; height: 30px; }
.tip footer { display: flex; justify-content: flex-end; padding: 6px 11px 0; }
.tip footer button { width: 78px; height: 26px; border-radius: 3px; background: #2c80e0; color: #fff; }
</style>
